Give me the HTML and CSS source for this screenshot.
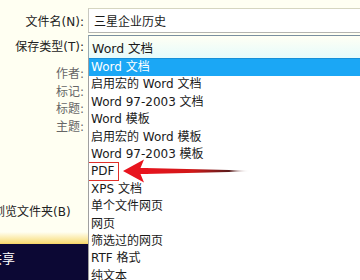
FILE: index.html
```html
<!DOCTYPE html>
<html lang="zh-CN">
<head>
  <meta charset="UTF-8" />
  <title>另存为</title>
  <link rel="stylesheet" href="styles.css">
</head>
<body>

  <div class="dialog">
    <div class="label">文件名(N):</div>
    <div class="name-box">三星企业历史</div>

    <div class="label">保存类型(T):</div>
    <div class="type-box">Word 文档</div>

    <div class="side">
      <ul class="meta">
        <li>作者:</li>
        <li>标记:</li>
        <li>标题:</li>
        <li>主题:</li>
      </ul>
      <div class="browse">浏览文件夹(B)</div>
      <div class="share"><span>共享</span></div>
    </div>

    <ul class="type-list">
      <li class="selected">Word 文档</li>
      <li>启用宏的 Word 文档</li>
      <li>Word 97-2003 文档</li>
      <li>Word 模板</li>
      <li>启用宏的 Word 模板</li>
      <li>Word 97-2003 模板</li>
      <li class="pdf"><span class="mark">PDF</span>
        <svg class="arrow" width="130" height="28" viewBox="0 0 130 28">
          <defs>
            <linearGradient id="shaft" x1="0" y1="0" x2="1" y2="0">
              <stop offset="0" stop-color="#e8141e"/>
              <stop offset="0.45" stop-color="#d01818"/>
              <stop offset="0.8" stop-color="#5a1c1c"/>
              <stop offset="1" stop-color="#ffffff" stop-opacity="0"/>
            </linearGradient>
          </defs>
          <polygon points="22,11 127,13.4 127,14.4 22,17" fill="url(#shaft)"/>
          <polygon points="0,14 21,2.5 17.5,11 25,11 25,17 17.5,17 21,25.5" fill="#e8141e"/>
        </svg>
      </li>
      <li>XPS 文档</li>
      <li>单个文件网页</li>
      <li>网页</li>
      <li>筛选过的网页</li>
      <li>RTF 格式</li>
      <li>纯文本</li>
    </ul>
  </div>

</body>
</html>
```

FILE: styles.css
```css
body {
  margin: 0;
  background-color: #fffff2;
  font-family: "DejaVu Sans", "Noto Sans CJK SC", sans-serif;
  font-size: 12px;
  color: #1a1a1a;
  overflow: hidden;
}

.dialog {
  display: grid;
  grid-template-columns: 88px 1fr;
  grid-template-rows: 33px 25px 222px;
  height: 280px;
}

.label {
  display: flex;
  align-items: center;
  justify-content: flex-end;
  padding-right: 4px;
  color: #222;
  white-space: nowrap;
}

.label:first-child {
  padding-top: 8px;
}

.name-box {
  margin-top: 8px;
  border-top: 1px solid #d6d6c0;
  border-bottom: 1px solid #b4b4b0;
  border-left: 1px solid #c8c8c0;
  background-color: #fff;
  padding-left: 5px;
  display: flex;
  align-items: center;
}

.type-box {
  margin-top: 2px;
  border-top: 1px solid #7a8fa0;
  border-left: 1px solid #9aa8b0;
  background: linear-gradient(#fffff4, #e6fbfb);
  padding-left: 3px;
  display: flex;
  align-items: center;
  font-size: 12.5px;
}

.side {
  display: flex;
  flex-direction: column;
  overflow: hidden;
}

.meta {
  list-style: none;
  margin: 0;
  padding: 8px 4px 0 0;
  flex: 1;
}

.meta li {
  text-align: right;
  line-height: 17.7px;
  color: #666;
}

.browse {
  margin-left: -7px;
  margin-bottom: 11px;
  line-height: 18px;
  white-space: nowrap;
  color: #222;
}

.share {
  height: 48px;
  background: linear-gradient(#fffff2 0, #f8dc78 11px, #f4d060 12px, #0c0834 12px);
  white-space: nowrap;
}

.share span {
  display: block;
  margin: 16px 0 0 -11px;
  color: #fff;
  font-size: 13px;
}

.type-list {
  list-style: none;
  margin: 0;
  padding: 0;
  background-color: #fff;
  border-left: 1px solid #a0a0a0;
  overflow: hidden;
}

.type-list li {
  height: 17.4px;
  line-height: 17.4px;
  padding-left: 2px;
  white-space: nowrap;
}

.type-list li.selected {
  background-color: #1ba7f5;
  border-top: 1px solid #1690d8;
  color: #fff;
}

.pdf {
  position: relative;
}

.mark {
  display: inline-block;
  margin-left: -3px;
  padding: 0 4px 0 2px;
  line-height: 17px;
  border: 1px solid #e0302a;
  vertical-align: top;
  margin-top: -1px;
}

.arrow {
  position: absolute;
  left: 34px;
  top: -6px;
}
```
